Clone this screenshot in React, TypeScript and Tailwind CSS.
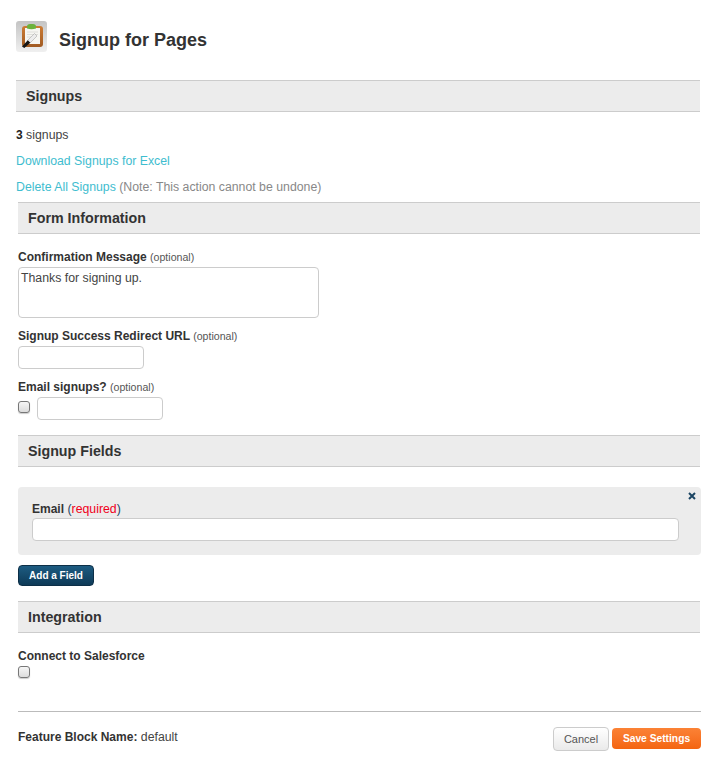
function SectionHeader({ title }: { title: string }) {
  return (
    <div className="flex h-8 items-center border-y border-[#ccc] bg-[#ececec] px-2.5 pt-px text-[14.25px] font-bold text-[#333]">
      {title}
    </div>
  );
}

function Optional() {
  return <span className="text-[10.6px] font-normal text-[#555]"> (optional)</span>;
}

function Label({ children }: { children: React.ReactNode }) {
  return <div className="h-4 text-[12px] leading-4 font-bold text-[#333]">{children}</div>;
}

function Checkbox() {
  return (
    <span className="block h-3 w-3 rounded-[3px] border border-[#777] bg-gradient-to-b from-[#f6f6f6] to-[#dcdcdc] shadow-[0_1px_1px_rgba(0,0,0,0.2)]" />
  );
}

function TextBox({ className }: { className: string }) {
  return <input type="text" className={`block rounded-[4px] border border-[#ccc] bg-white ${className}`} />;
}

function AppIcon() {
  return (
    <svg width="31" height="31" viewBox="0 0 31 31">
      <defs>
        <linearGradient id="tile" x1="0" y1="0" x2="0" y2="1">
          <stop offset="0" stopColor="#c4c4c4" />
          <stop offset="1" stopColor="#f0f0f0" />
        </linearGradient>
        <linearGradient id="board" x1="0" y1="0" x2="0" y2="1">
          <stop offset="0" stopColor="#cd7c34" />
          <stop offset="1" stopColor="#a05a22" />
        </linearGradient>
      </defs>
      <rect width="31" height="31" rx="3" fill="url(#tile)" />
      <rect x="6" y="5" width="21" height="21" rx="3" fill="url(#board)" />
      <rect x="9" y="7" width="15" height="16" fill="#f6f6f2" />
      <path d="M11 11h11M11 13.500h11M11 16h6" stroke="#dedeDa" strokeWidth="1" />
      <path d="M11 5.500q0-2.500 3-2.500h3q3 0 3 2.500v2q-4.500 1.500-9 0z" fill="#6cb23c" />
      <path d="M11.500 19.500l7-7 2.500 2.500-7 7z" fill="#ececec" stroke="#9a9a9a" strokeWidth="0.5" />
      <path d="M6 25.500l5.800-6.300 2.500 2.500-6 5.300z" fill="#161616" />
    </svg>
  );
}

export default function App() {
  return (
    <div className="h-[759px] w-[715px] overflow-hidden bg-white pt-[21px] pr-[15px] pl-4 font-['Liberation_Sans',Arial,sans-serif] text-[12.3px] text-[#444]">
      <div className="flex h-[31px] items-start gap-3">
        <AppIcon />
        <h1 className="h-[31px] text-[18px] leading-[38px] font-bold text-[#333]">Signup for Pages</h1>
      </div>

      <div className="mt-7">
        <SectionHeader title="Signups" />
        <div className="mt-[15px] h-[26px] leading-[16px]">
          <b className="text-[12px] text-[#222]">3</b> signups
        </div>
        <div className="h-[26px] leading-[16px]">
          <a className="text-[#3fbdcf]">Download Signups for Excel</a>
        </div>
        <div className="h-[16px] leading-[16px] text-[#888]">
          <a className="text-[#3fbdcf]">Delete All Signups</a> (Note: This action cannot be undone)
        </div>
      </div>

      <div className="pl-0.5">
        <div className="mt-[7px]">
          <SectionHeader title="Form Information" />
        </div>

        <div className="mt-[15px]">
          <Label>
            Confirmation Message <Optional />
          </Label>
          <textarea
            readOnly
            value="Thanks for signing up."
            className="mt-[2px] block h-[51px] w-[301px] resize-none rounded-[4px] border border-[#ccc] bg-white px-[2px] pt-[3px] text-[12.3px] leading-[15px] text-[#444]"
          />
        </div>

        <div className="mt-[10px]">
          <Label>
            Signup Success Redirect URL <Optional />
          </Label>
          <TextBox className="mt-[2px] h-[23px] w-[126px]" />
        </div>

        <div className="mt-[10px]">
          <Label>
            Email signups? <Optional />
          </Label>
          <div className="mt-[2px] flex items-start gap-[7px]">
            <div className="pt-[4px]">
              <Checkbox />
            </div>
            <TextBox className="h-[23px] w-[126px]" />
          </div>
        </div>

        <div className="mt-[15px]">
          <SectionHeader title="Signup Fields" />
        </div>

        <div className="relative mt-5 mr-[-1px] h-[68px] rounded-[4px] bg-[#ececec] px-3.5 pt-[14px]">
          <svg className="absolute top-[5px] right-[5px]" width="8" height="8" viewBox="0 0 8 8">
            <path d="M1 1l6 6M7 1l-6 6" stroke="#1c4563" strokeWidth="2" />
          </svg>
          <div className="h-4 leading-4">
            <b className="text-[12px] text-[#333]">Email</b> <span className="text-[#1c4563]">(</span>
            <span className="text-[#f00020]">required</span>
            <span className="text-[#1c4563]">)</span>
          </div>
          <TextBox className="mt-[1px] h-[23px] w-[647px]" />
        </div>

        <button className="mt-[10px] block h-[21px] w-[76px] rounded-[4px] border border-[#0d2f47] bg-gradient-to-b from-[#1d5c82] to-[#0e3a57] text-[10px] font-bold text-white">
          Add a Field
        </button>

        <div className="mt-[15px]">
          <SectionHeader title="Integration" />
        </div>

        <div className="mt-[15px]">
          <Label>Connect to Salesforce</Label>
          <div className="mt-[2px]">
            <Checkbox />
          </div>
        </div>

        <div className="mt-[33px] mr-[-1px] flex h-[48px] justify-between border-t border-[#bbb]">
          <div className="mt-[17px] leading-4">
            <b className="text-[12px] text-[#333]">Feature Block Name:</b> default
          </div>
          <div className="mt-[15px] flex items-start gap-[3px]">
            <button className="h-6 w-14 rounded-[4px] border border-[#ccc] bg-gradient-to-b from-white to-[#eaeaea] text-[11px] text-[#555]">
              Cancel
            </button>
            <button className="mt-px h-[21px] w-[89px] rounded-[4px] bg-gradient-to-b from-[#fb8235] to-[#f4650f] text-[10.25px] font-bold text-white">
              Save Settings
            </button>
          </div>
        </div>
      </div>
    </div>
  );
}
